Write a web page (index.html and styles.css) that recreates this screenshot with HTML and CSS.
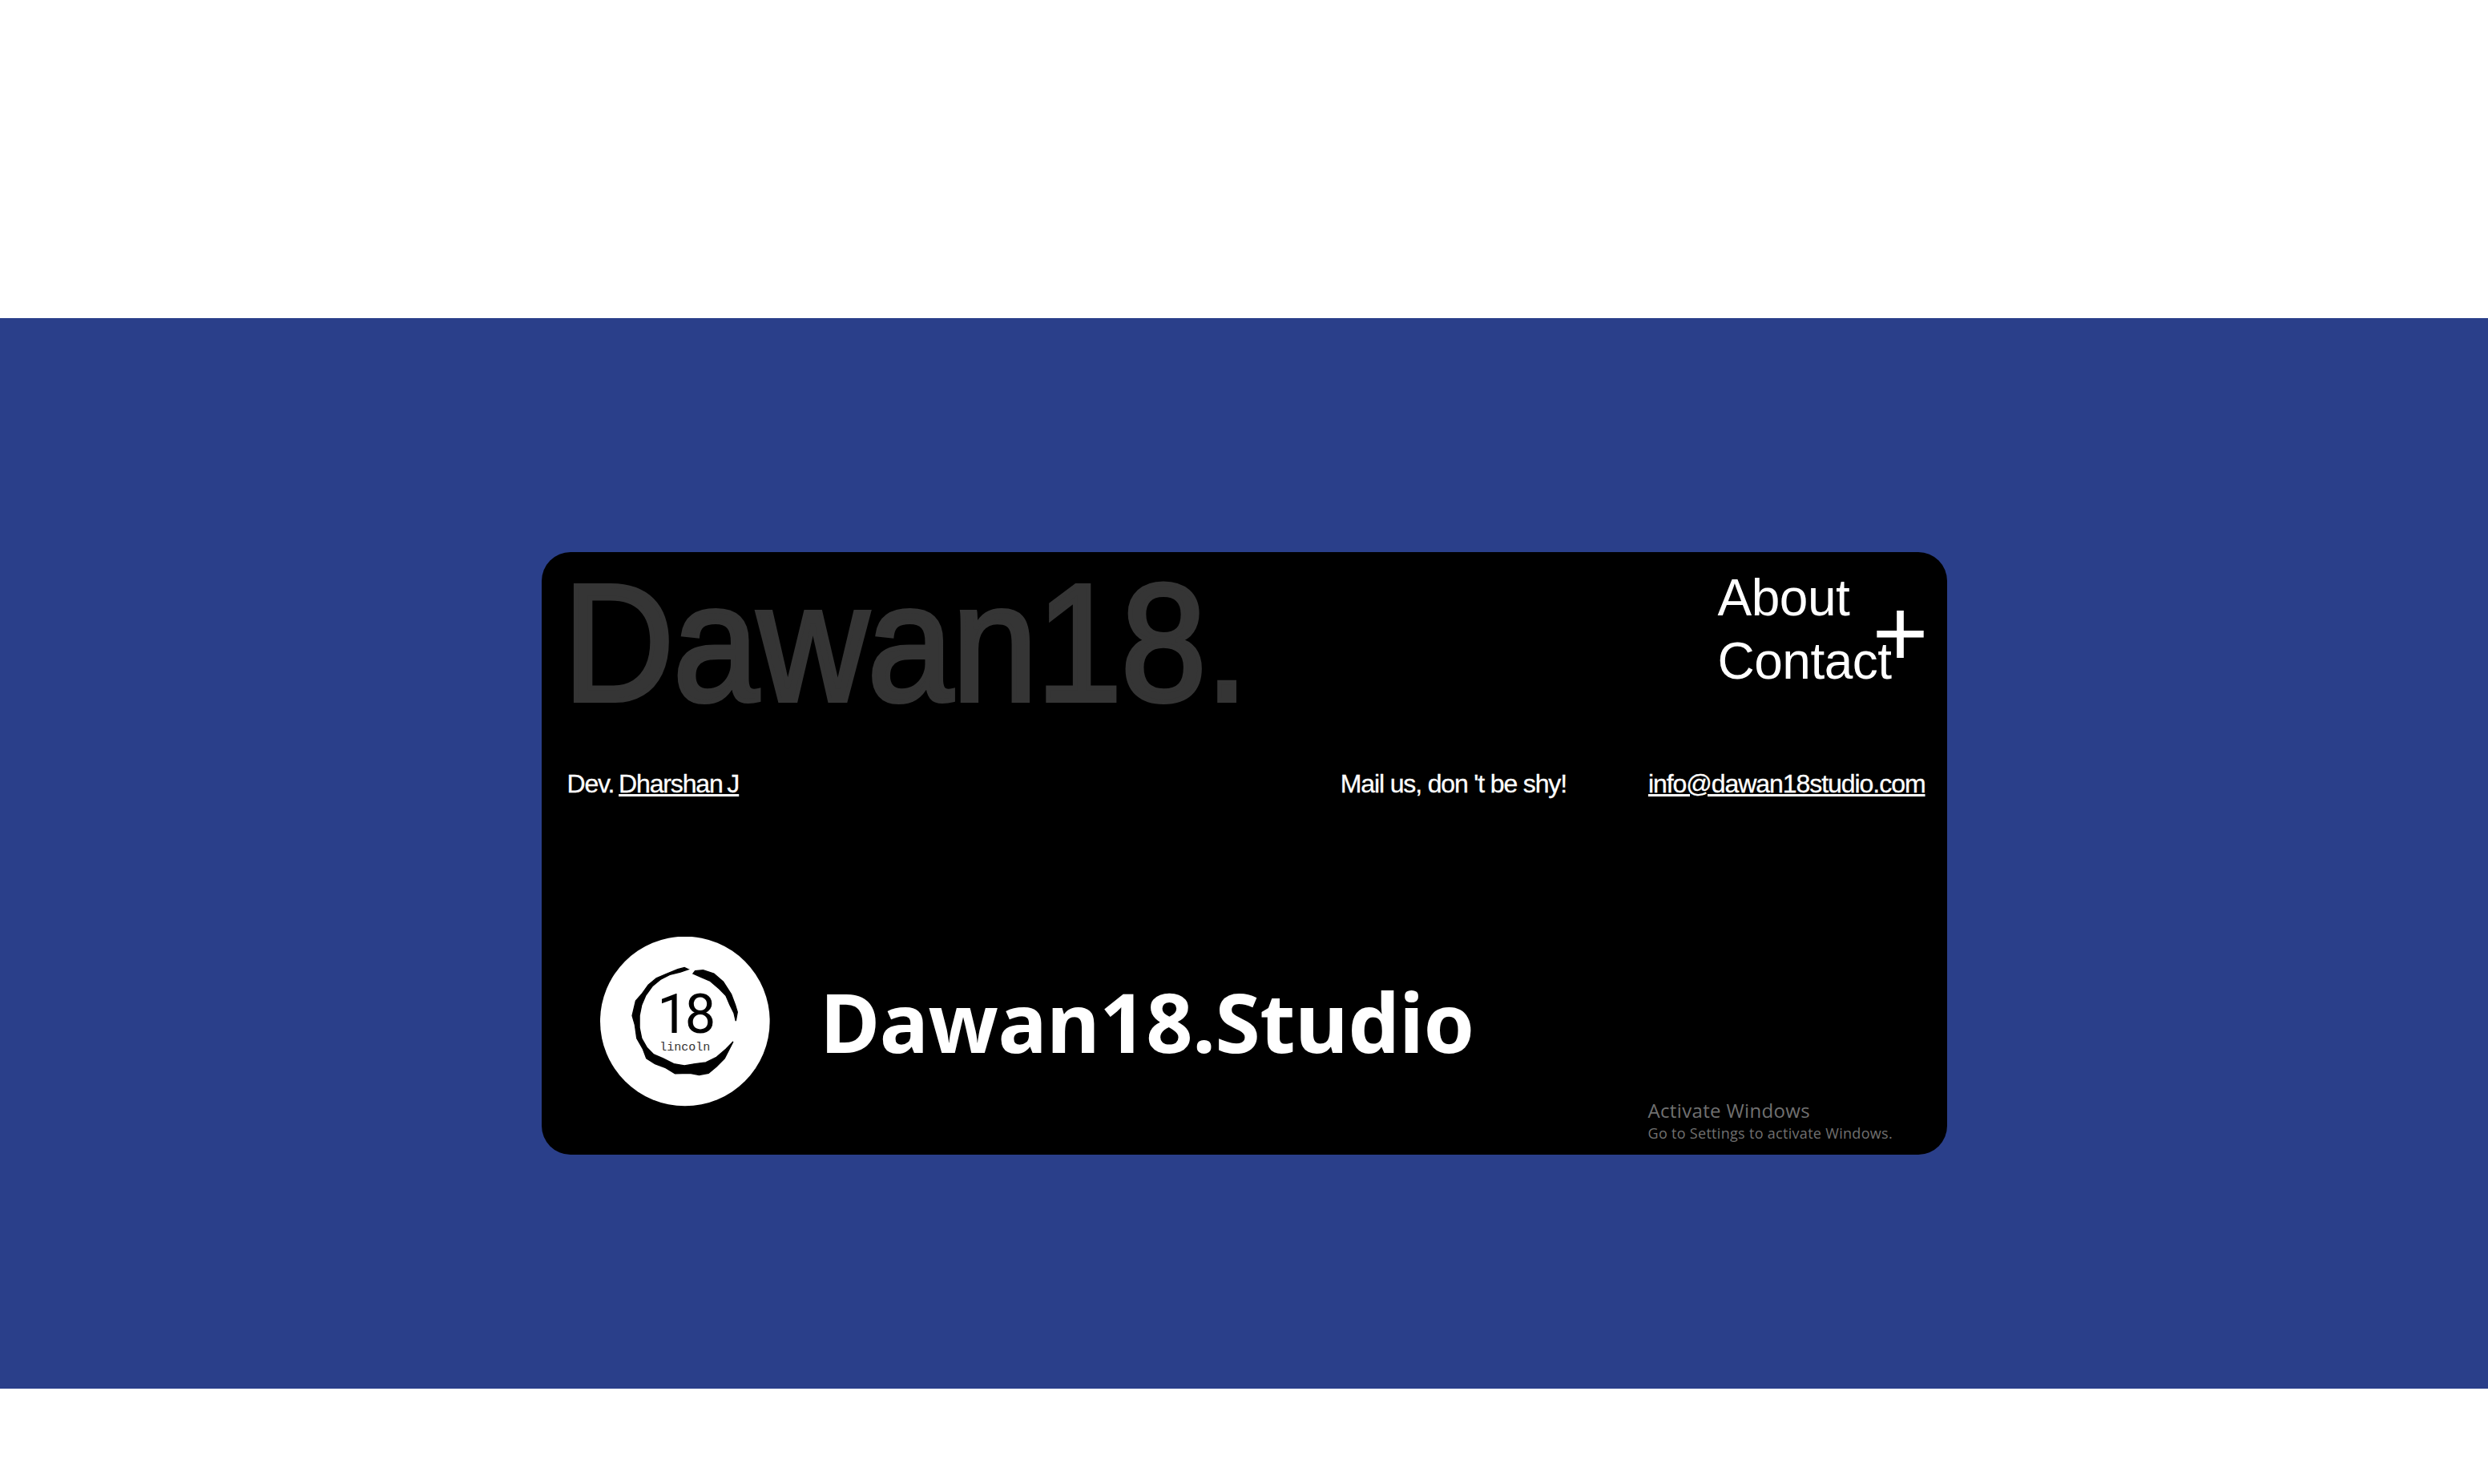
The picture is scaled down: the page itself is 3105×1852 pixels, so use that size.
FILE: index.html
```html
<!doctype html>
<html>
  <head>
    <title>Dawan18.Studio</title>
    <link rel="stylesheet" href="styles.css">
  </head>
  <body>
    <section class="band">
      <footer class="card">
        <div class="top">
          <div class="wordmark">Dawan18.</div>
          <nav class="links">
            <a href="#">About</a>
            <a href="#">Contact</a>
            <span class="plus">+</span>
          </nav>
        </div>
        <div class="info">
          <div class="dev">Dev. <a href="#">Dharshan J</a></div>
          <div class="mail">
            <span>Mail us, don 't be shy!</span>
            <a href="#">info@dawan18studio.com</a>
          </div>
        </div>
        <div class="brand">
          <svg class="logo" viewBox="85 90 635 635">
            <circle cx="402" cy="406" r="317" fill="#fff"/>
            <!-- brush ring, two strokes -->
            <path class="ring" d="M415 212 L400 205 L375 212 L335 228 L295 245 L265 270 L240 305 L218 330 L205 385 L215 420 L222 470 L245 510 L258 545 L290 565 L330 580 L365 602 L420 600 L455 607 L490 600 L520 575 L550 545 L582 482 L555 510 L520 540 L480 560 L440 565 L400 572 L360 565 L320 545 L285 530 L260 505 L240 470 L232 430 L232 385 L240 345 L255 310 L280 275 L310 250 L345 232 L385 222 Z"/>
            <path class="ring" d="M432 228 L440 218 L470 215 L510 228 L545 258 L575 305 L590 345 L598 372 L592 405 L585 375 L570 345 L555 310 L530 285 L495 255 L460 240 Z"/>
            <text class="logo-num" x="402" y="450" text-anchor="middle">18</text>
            <text class="logo-name" x="402" y="515" text-anchor="middle">lincoln</text>
          </svg>
          <div class="studio">Dawan18.Studio</div>
        </div>
        <div class="activate">
          <div class="activate-title">Activate Windows</div>
          <div class="activate-sub">Go to Settings to activate Windows.</div>
        </div>
      </footer>
    </section>
  </body>
</html>
```

FILE: styles.css
```css
html, body {margin: 0; background: #fff;}
body {height: 1852px; overflow: hidden; font-family: "Liberation Sans", Arial, sans-serif;}
a {color: #fff;}

.band {margin-top: 397px; height: 1336px; background: #2a3f8a; display: flex; justify-content: center; padding-top: 292px; box-sizing: border-box;}
.card {position: relative; width: 1754px; height: 752px; box-sizing: border-box; padding: 0 27px 0 32px; background: #000; border-radius: 36px; color: #fff;}

.top {display: flex; justify-content: space-between; align-items: flex-start;}
.wordmark {font-size: 208px; line-height: 198px; letter-spacing: -1.1px; color: #353535; margin: 14px 0 1px -5px; transform: scaleX(.92); transform-origin: left; -webkit-text-stroke: 6px #353535;}
.links {position: relative; width: 259px; margin-top: 18px; display: flex; flex-direction: column; font-size: 64px; line-height: 79px; letter-spacing: -0.5px;}
.links a {text-decoration: none;}
.plus {position: absolute; right: -4px; top: 14px; font-size: 120px; line-height: 138px; letter-spacing: 0;}

.info {display: flex; justify-content: space-between; margin-top: 56px; font-size: 32px; line-height: 40px; letter-spacing: -1.15px; -webkit-text-stroke: .3px #fff;}
.dev {word-spacing: -2px;}
.mail {display: flex; gap: 102px;}
.mail a {letter-spacing: -1.05px;}

.brand {display: flex; align-items: center; gap: 63px; margin-top: 171px; margin-left: 41px;}
.logo {width: 212px; height: 212px; display: block;}
.ring {stroke: #000; stroke-width: 4;}
.logo-num {font-family: Roboto, sans-serif; font-size: 205px; letter-spacing: -12px;}
.logo-name {font-family: "Liberation Mono", monospace; font-size: 45px; fill: #333;}
.studio {font-family: "Noto Sans", sans-serif; font-weight: 700; font-size: 102px; line-height: 120px; letter-spacing: -0.35px;}

.activate {position: absolute; left: 1381px; bottom: 15px; font-family: "Open Sans", sans-serif; color: #707070;}
.activate-title {font-size: 24px; line-height: 32px; letter-spacing: .35px;}
.activate-sub {font-size: 18px; line-height: 24px; letter-spacing: .3px;}
```
